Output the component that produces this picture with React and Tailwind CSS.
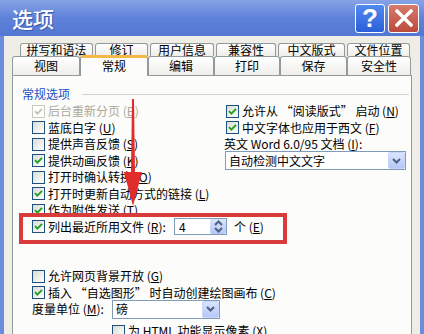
import React from "react";

function Check({ checked = false, disabled = false }) {
  return (
    <span
      className={
        disabled
          ? "w-[13px] h-[13px] shrink-0 border border-[#cac8bb] bg-white flex items-center justify-center"
          : "w-[13px] h-[13px] shrink-0 border border-[#1c5180] bg-linear-to-br from-[#dcdcd4] to-white flex items-center justify-center"
      }
    >
      {checked && (
        <svg width="9" height="9" viewBox="0 0 9 9">
          <path
            d="M1 4.2 L3.4 6.6 L8 1.8"
            fill="none"
            stroke={disabled ? "#c4c2b4" : "#21a121"}
            strokeWidth="1.9"
          />
        </svg>
      )}
    </span>
  );
}

function K({ c }) {
  return (
    <>
      {" ("}
      <span className="underline">{c}</span>
      {")"}
    </>
  );
}

function Row({ checked, disabled, children }) {
  return (
    <div className="h-[16.5px] flex items-center gap-[3px]">
      <Check checked={checked} disabled={disabled} />
      <span className={disabled ? "text-[#aca899] whitespace-nowrap" : "whitespace-nowrap"}>{children}</span>
    </div>
  );
}

function Chevron({ up = false }) {
  return (
    <svg width="9" height="6" viewBox="0 0 9 6">
      <path d={up ? "M1 5 L4.5 1.5 L8 5" : "M1 1 L4.5 4.5 L8 1"} stroke="#4d6185" strokeWidth="2" fill="none" />
    </svg>
  );
}

function Select({ value, wide }) {
  return (
    <div
      className={
        wide
          ? "w-[181px] h-[19px] border border-[#7f9db9] bg-white flex items-center"
          : "w-[108px] h-[19px] border border-[#7f9db9] bg-white flex items-center"
      }
    >
      <span className="flex-1 pl-[3px] whitespace-nowrap">{value}</span>
      <span className="w-[17px] h-[17px] rounded-[2px] bg-linear-to-b from-[#dbe4fc] to-[#b5c7f5] border border-[#c6d5fb] flex items-center justify-center">
        <Chevron />
      </span>
    </div>
  );
}

const row1 = [
  ["拼写和语法", "w-[73px]"],
  ["修订", "w-[53px]"],
  ["用户信息", "w-[64px]"],
  ["兼容性", "w-[60px]"],
  ["中文版式", "w-[67px]"],
  ["文件位置", "w-[63px]"],
];

const row2 = [
  ["视图", "w-[68px]", false],
  ["常规", "w-[68px]", true],
  ["编辑", "w-[66px]", false],
  ["打印", "w-[66px]", false],
  ["保存", "w-[67px]", false],
  ["安全性", "w-[64px]", false],
];

export default function App() {
  return (
    <div className="relative w-[424px] h-[334px] overflow-hidden flex flex-col bg-[#eeede6] text-[12px] leading-none text-black font-['Noto_Sans_CJK_SC','Noto_Sans',sans-serif]">
      {/* title bar */}
      <div className="h-[36px] shrink-0 bg-linear-to-b from-[#86a3e6] via-[#5f82d9] to-[#5378d3] flex items-center pl-[12px] pr-[5px]">
        <span className="text-white text-[21px] font-medium leading-none [text-shadow:1px_1px_0_#3a57a8]">选项</span>
        <div className="ml-auto flex gap-[3px]">
          <div className="w-[30px] h-[29px] rounded-[3px] border border-white bg-linear-to-b from-[#5289ee] to-[#2b5fd8] flex items-center justify-center">
            <span className="text-white text-[26px] font-bold font-['Liberation_Sans',sans-serif] leading-none">?</span>
          </div>
          <div className="w-[31px] h-[29px] rounded-[3px] border border-white bg-linear-to-b from-[#d77a6c] to-[#bb4b3d] flex items-center justify-center">
            <svg width="18" height="18" viewBox="0 0 18 18">
              <path d="M2 2 L16 16 M16 2 L2 16" stroke="white" strokeWidth="3.4" strokeLinecap="square" />
            </svg>
          </div>
        </div>
      </div>

      <div className="flex-1 flex min-h-0">
        <div className="w-[4px] bg-[#6b8cdc]" />
        <div className="flex-1 flex flex-col pt-[7px] px-[8px] min-w-0">
          {/* tab row 1 */}
          <div className="flex gap-[2px] ml-[8px] h-[16px]">
            {row1.map(([t, w]) => (
              <div
                key={t}
                className={`${w} h-full flex items-center justify-center border border-b-0 border-[#919b9c] rounded-t-[3px] bg-linear-to-b from-white to-[#efeee9]`}
              >
                {t}
              </div>
            ))}
          </div>
          {/* tab row 2 */}
          <div className="flex h-[19px]">
            {row2.map(([t, w, sel]) =>
              sel ? (
                <div
                  key={t}
                  className={`${w} h-[21px] -mt-[1px] relative z-10 bg-[#fcfcfa] border-x border-[#919b9c] border-t-[3px] border-t-[#f3b847] rounded-t-[3px] flex items-center justify-center pb-[3px]`}
                >
                  {t}
                </div>
              ) : (
                <div
                  key={t}
                  className={`${w} h-full flex items-center justify-center border border-b-0 border-[#919b9c] rounded-t-[3px] bg-linear-to-b from-white to-[#efeee9]`}
                >
                  {t}
                </div>
              )
            )}
          </div>
          {/* panel */}
          <div className="flex-1 border border-[#919b9c] bg-[#fcfcfa] pt-[10px] flex flex-col">
            <div className="h-[16px] flex items-center pl-[9px]">
              <span className="text-[#1d4fc4]">常规选项</span>
              <div className="flex-1 h-px bg-[#d5d3c7] ml-[12px] mr-[2px]" />
            </div>
            <div className="flex mt-[0.75px]">
              <div className="w-[213px] pl-[19px] flex flex-col">
                <Row checked disabled>
                  后台重新分页<K c="B" />
                </Row>
                <Row>
                  蓝底白字<K c="U" />
                </Row>
                <Row>
                  提供声音反馈<K c="S" />
                </Row>
                <Row checked>
                  提供动画反馈<K c="K" />
                </Row>
                <Row>
                  打开时确认转换<K c="O" />
                </Row>
                <Row checked>
                  打开时更新自动方式的链接<K c="L" />
                </Row>
                <Row checked>
                  作为附件发送<K c="T" />
                </Row>
              </div>
              <div className="flex-1 flex flex-col">
                <Row checked>
                  允许从 “阅读版式” 启动<K c="N" />
                </Row>
                <Row checked>
                  中文字体也应用于西文<K c="F" />
                </Row>
                <div className="h-[16.5px] flex items-center -ml-[2px] whitespace-nowrap">
                  英文 Word 6.0/95 文档<K c="I" />:
                </div>
                <div className="-mt-[1px] -ml-[1px]">
                  <Select value="自动检测中文文字" wide />
                </div>
              </div>
            </div>
            {/* row H */}
            <div className="h-[16.5px] pl-[19px] flex items-center">
              <Check checked />
              <span className="w-[126px] ml-[3px] whitespace-nowrap">
                列出最近所用文件<K c="R" />:
              </span>
              <div className="w-[53px] h-[17px] border border-[#7f9db9] bg-white flex items-center">
                <span className="flex-1 pl-[4px]">4</span>
                <span className="w-[16px] h-[15px] rounded-[2px] bg-linear-to-b from-[#dbe4fc] to-[#b5c7f5] flex flex-col items-center justify-center gap-[1px]">
                  <Chevron up />
                  <Chevron />
                </span>
              </div>
              <span className="ml-[7px] whitespace-nowrap">
                个<K c="E" />
              </span>
            </div>
            <div className="h-[33px] shrink-0" />
            <div className="pl-[19px] flex flex-col">
              <Row>
                允许网页背景开放<K c="G" />
              </Row>
              <Row checked>
                插入 “自选图形” 时自动创建绘图画布<K c="C" />
              </Row>
              <div className="h-[19px] -mt-[1px] flex items-center">
                <span className="w-[80px] whitespace-nowrap">
                  度量单位<K c="M" />:
                </span>
                <Select value="磅" />
              </div>
              <div className="pl-[80px] pt-[4px]">
                <Row>
                  为 HTML 功能显示像素<K c="X" />
                </Row>
              </div>
            </div>
          </div>
        </div>
        <div className="w-[4px] bg-[#6b8cdc]" />
      </div>

      {/* red annotation rectangle */}
      <div className="absolute left-[19px] top-[213px] w-[268px] h-[31px] border-4 border-[#d93a3a] pointer-events-none" />
      {/* red annotation arrow */}
      <svg className="absolute left-[123px] top-[96px]" width="20" height="114" viewBox="0 0 20 114">
        <polygon points="9,3 11,3 12,78 8,78" fill="#e22b2b" />
        <polygon points="1,76 19,76 10,110" fill="#e22b2b" />
      </svg>
    </div>
  );
}
